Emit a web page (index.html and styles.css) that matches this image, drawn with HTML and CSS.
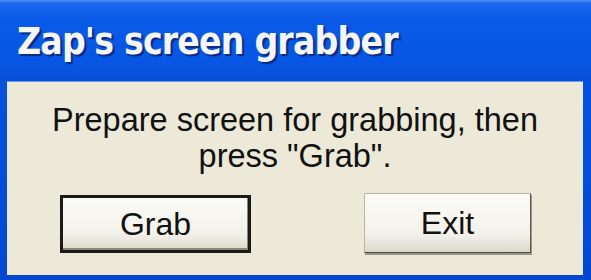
FILE: index.html
```html
<!DOCTYPE html>
<html>
<head>
<meta charset="utf-8">
<title>Zap's screen grabber</title>
<link rel="stylesheet" href="styles.css">
</head>
<body>

<div class="window">
	<div class="titlebar">
		<span class="title">Zap's screen grabber</span>
	</div>
	<div class="client">
		<p class="message">Prepare screen for grabbing, then<br>press "Grab".</p>
		<div class="buttons">
			<button class="btn btn-default">Grab</button>
			<button class="btn btn-exit">Exit</button>
		</div>
	</div>
</div>

</body>
</html>
```

FILE: styles.css
```css
body {
	margin : 0;
	background-color : #0a4fd8;
	font-family : Tahoma, "Liberation Sans", sans-serif;
}

.window {
	display : flex;
	flex-direction : column;
	width : 591px;
	height : 280px;
	background : linear-gradient(to bottom, #3f8cf3 0, #0b5ae6 3px, #0854e0 40px, #0448d0 100%);
}

.titlebar {
	height : 81px;
	display : flex;
	align-items : center;
	padding-left : 17px;
	box-sizing : border-box;
	background : linear-gradient(to bottom, #4f95f5 0, #1d68ee 3px, #0a5ae8 20px, #0756e4 60px, #0a4fd8 81px);
}

.title {
	color : #f4f6fb;
	font-family : "DejaVu Sans Condensed", "DejaVu Sans", sans-serif;
	font-stretch : condensed;
	font-weight : bold;
	font-size : 37px;
	letter-spacing : -0.85px;
	text-shadow : 2px 2px 1px #0a2a80;
	margin-top : 1px;
}

.client {
	flex : 1;
	margin : 0 8px 5px 7px;
	padding-top : 20px;
	background-color : #ece9d8;
	border-top : 1px solid #6f9be8;
	box-sizing : border-box;
}

.message {
	margin : 0;
	text-align : center;
	font-family : "Liberation Sans", sans-serif;
	font-size : 32.5px;
	line-height : 36px;
	color : #111;
}

.buttons {
	display : flex;
	margin-top : 21px;
	padding-left : 53px;
	gap : 113px;
}

.btn {
	height : 58px;
	font-family : "Liberation Sans", sans-serif;
	font-size : 32px;
	color : #111;
	background : linear-gradient(to bottom, #fbfbf7 0, #f2f1ea 70%, #dcd8c8 100%);
	border : 1px solid #b9b6a8;
	border-right-color : #5a5850;
	border-bottom-color : #4a4840;
	box-shadow : 1px 2px 0 #9a978a;
	padding : 0;
}

.btn-default {
	width : 191px;
	border : 3px solid #1c1a16;
	box-shadow : inset -1px -2px 0 #8a877c;
}

.btn-exit {
	width : 167px;
	height : 60px;
	margin-top : -2px;
}
```
